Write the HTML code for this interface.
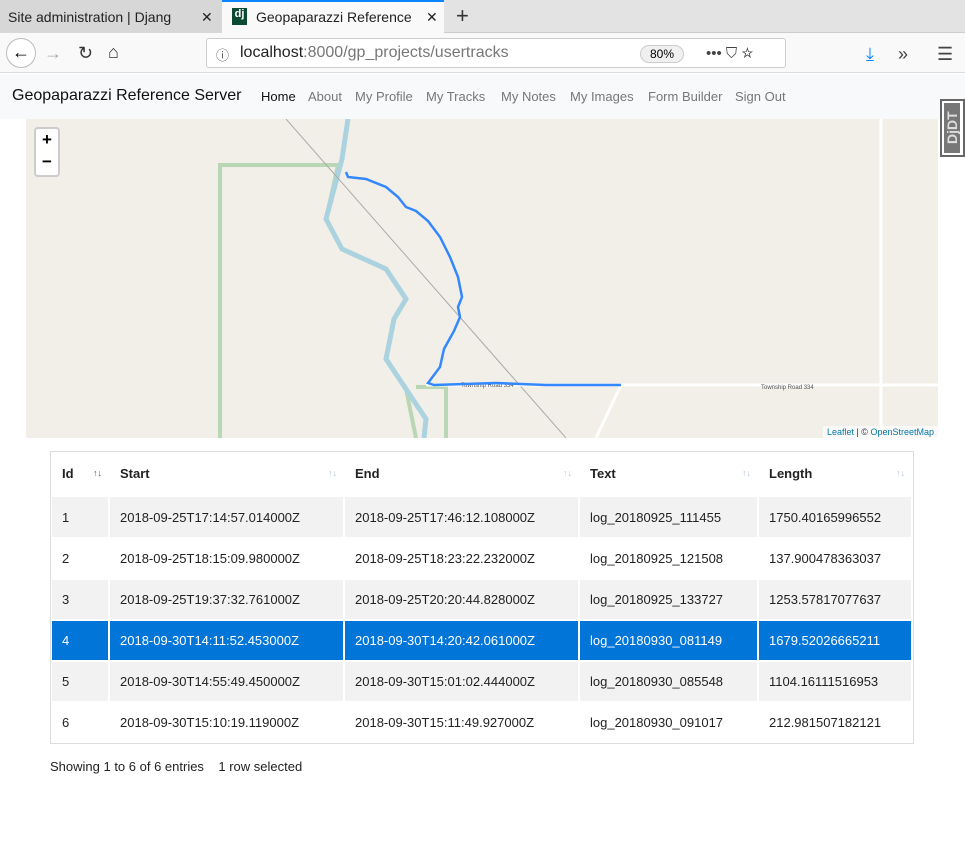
<!DOCTYPE html>
<html><head><meta charset="utf-8"><style>
*{margin:0;padding:0;box-sizing:border-box}
body{width:965px;height:864px;background:#fff;font-family:"Liberation Sans",sans-serif;position:relative;overflow:hidden}
.a{position:absolute}
.tabbar{left:0;top:0;width:965px;height:33px;background:#e3e3e3;border-bottom:1px solid #ccc}
.tab{font-size:14px;color:#222;top:9px}
.nav{left:0;top:33px;width:965px;height:40px;background:#f9f9fa;border-bottom:1px solid #ddd}
.url{left:206px;top:38px;width:580px;height:30px;background:#fff;border:1px solid #ccc;border-radius:3px}
.bs{left:0;top:74px;width:965px;height:45px;background:#f8f9fa}
.nl{top:89px;font-size:13px;color:#777}
.map{left:26px;top:119px;width:912px;height:319px;background:#f2efe9;overflow:hidden}
.tbl{left:50px;top:451px;width:864px;height:293px;border:1px solid #ddd;background:#fff}
.c{position:absolute;font-size:13px;color:#222;display:flex;align-items:center;padding-left:10px}
.h{font-weight:bold;background:#fff}
.g{background:#f2f2f2}
.s{background:#0275d8;color:#fff}
.w{background:#fff}
.ar{position:absolute;right:6px;font-size:9px;color:#b8c4d8}
</style></head><body>
<div class="a tabbar"></div>
<div class="a" style="left:0;top:0;width:222px;height:33px;background:#d7d7d7"></div>
<div class="a tab" style="left:8px">Site administration | Djang</div>
<div class="a tab" style="left:201px">✕</div>
<div class="a" style="left:222px;top:0;width:222px;height:34px;background:#f9f9fa;border-top:2px solid #0a84ff"></div>
<div class="a" style="left:232px;top:8px;width:15px;height:17px;background:#0c4b33;color:#fff;font-size:11px;font-weight:bold;text-align:center">dj</div>
<div class="a tab" style="left:256px">Geopaparazzi Reference</div>
<div class="a tab" style="left:426px">✕</div>
<div class="a" style="left:456px;top:3px;font-size:22px;color:#333">+</div>
<div class="a nav"></div>
<div class="a" style="left:6px;top:38px;width:30px;height:30px;border:1px solid #bbb;border-radius:50%;font-size:18px;text-align:center;line-height:27px;background:#fff">←</div>
<div class="a" style="left:44px;top:43px;font-size:18px;color:#aaa">→</div>
<div class="a" style="left:78px;top:43px;font-size:18px;color:#333">↻</div>
<div class="a" style="left:108px;top:42px;font-size:18px;color:#333">⌂</div>
<div class="a url"></div>
<div class="a" style="left:216px;top:45px;font-size:13px;color:#555">ⓘ</div>
<div class="a" style="left:240px;top:44px;font-size:16px;color:#222">localhost<span style="color:#777">:8000/gp_projects/usertracks</span></div>
<div class="a" style="left:640px;top:45px;width:44px;height:18px;border:1px solid #ccc;border-radius:9px;font-size:12px;text-align:center;line-height:16px;background:#f0f0f0">80%</div>
<div class="a" style="left:706px;top:45px;font-size:15px;color:#444">••• ⛉ ☆</div>
<div class="a" style="left:866px;top:44px;font-size:18px;color:#0a84ff">⤓</div>
<div class="a" style="left:898px;top:44px;font-size:18px;color:#444">»</div>
<div class="a" style="left:937px;top:44px;font-size:18px;color:#444">☰</div>
<div class="a bs"></div>
<div class="a" style="left:12px;top:87px;font-size:16px;color:#111">Geopaparazzi Reference Server</div>
<div class="a nl" style="left:261px;color:#111">Home</div>
<div class="a nl" style="left:308px">About</div>
<div class="a nl" style="left:355px">My Profile</div>
<div class="a nl" style="left:426px">My Tracks</div>
<div class="a nl" style="left:501px">My Notes</div>
<div class="a nl" style="left:570px">My Images</div>
<div class="a nl" style="left:648px">Form Builder</div>
<div class="a nl" style="left:735px">Sign Out</div>
<div class="a map">
<svg width="912" height="319" style="position:absolute;left:0;top:0">
<polyline points="194,319 194,46 312,46 300,100 316,130 360,150 380,180 368,200 360,240 380,270 390,319" fill="none" stroke="#b9d7b4" stroke-width="4"/>
<polyline points="322,0 316,40 300,100 316,130 360,150 380,180 368,200 360,240 380,270 400,300 398,319" fill="none" stroke="#aad3df" stroke-width="5"/>
<polyline points="390,268 420,268 420,319" fill="none" stroke="#b9d7b4" stroke-width="4"/>
<line x1="260" y1="0" x2="540" y2="319" stroke="#aaa" stroke-width="1"/>
<line x1="400" y1="266" x2="912" y2="266" stroke="#fff" stroke-width="3"/>
<line x1="855" y1="0" x2="855" y2="319" stroke="#fff" stroke-width="3"/>
<line x1="595" y1="266" x2="570" y2="319" stroke="#fff" stroke-width="3"/>
<text x="735" y="270" font-size="6" fill="#555" font-family="Liberation Sans">Township Road 334</text>
<text x="435" y="268" font-size="6" fill="#555" font-family="Liberation Sans">Township Road 334</text>
<polyline points="320,53 322,58 340,60 360,68 372,78 380,88 390,92 402,102 414,118 424,138 432,158 436,178 432,188 434,198 428,212 418,230 414,248 402,264 408,266 470,264 520,266 595,266" fill="none" stroke="#3388ff" stroke-width="2.5"/>
</svg>
<div class="a" style="left:8px;top:8px;width:26px;height:50px;background:#fff;border:2px solid rgba(0,0,0,.2);border-radius:4px;font-weight:bold;text-align:center;font-size:17px;line-height:22px">+<br>−</div>
<div class="a" style="right:0;bottom:0;background:rgba(255,255,255,.7);font-size:9px;padding:1px 4px;color:#333"><span style="color:#0078a8">Leaflet</span> | © <span style="color:#0078a8">OpenStreetMap</span></div>
</div>
<div class="a" style="left:940px;top:99px;width:25px;height:58px;background:#fff;border:2px solid #666"><div style="margin:2px;height:50px;background:#777;color:#ddd;font-size:14px;font-weight:bold;writing-mode:vertical-rl;transform:rotate(180deg);text-align:center">DjDT</div></div>
<div class="a tbl"></div>
<div id="t"></div>
<div class="a" style="left:50px;top:759px;font-size:13px;color:#222">Showing 1 to 6 of 6 entries &nbsp;&nbsp; 1 row selected</div>
<script>
var cols=[[52,56],[110,233],[345,233],[580,177],[759,152]];
var rows=[[453,40,'h',['Id','Start','End','Text','Length']],
[497,40,'g',['1','2018-09-25T17:14:57.014000Z','2018-09-25T17:46:12.108000Z','log_20180925_111455','1750.40165996552']],
[539,39,'w',['2','2018-09-25T18:15:09.980000Z','2018-09-25T18:23:22.232000Z','log_20180925_121508','137.900478363037']],
[580,39,'g',['3','2018-09-25T19:37:32.761000Z','2018-09-25T20:20:44.828000Z','log_20180925_133727','1253.57817077637']],
[621,39,'s',['4','2018-09-30T14:11:52.453000Z','2018-09-30T14:20:42.061000Z','log_20180930_081149','1679.52026665211']],
[662,39,'g',['5','2018-09-30T14:55:49.450000Z','2018-09-30T15:01:02.444000Z','log_20180930_085548','1104.16111516953']],
[703,39,'w',['6','2018-09-30T15:10:19.119000Z','2018-09-30T15:11:49.927000Z','log_20180930_091017','212.981507182121']]];
var h='';rows.forEach(function(r){cols.forEach(function(c,i){h+='<div class="c '+r[2]+'" style="left:'+c[0]+'px;top:'+r[0]+'px;width:'+c[1]+'px;height:'+r[1]+'px">'+r[3][i]+(r[2]=='h'?'<span class="ar"'+(i==0?' style="color:#555"':'')+'>↑↓</span>':'')+'</div>';});});
document.getElementById('t').innerHTML=h;
</script>
</body></html>
